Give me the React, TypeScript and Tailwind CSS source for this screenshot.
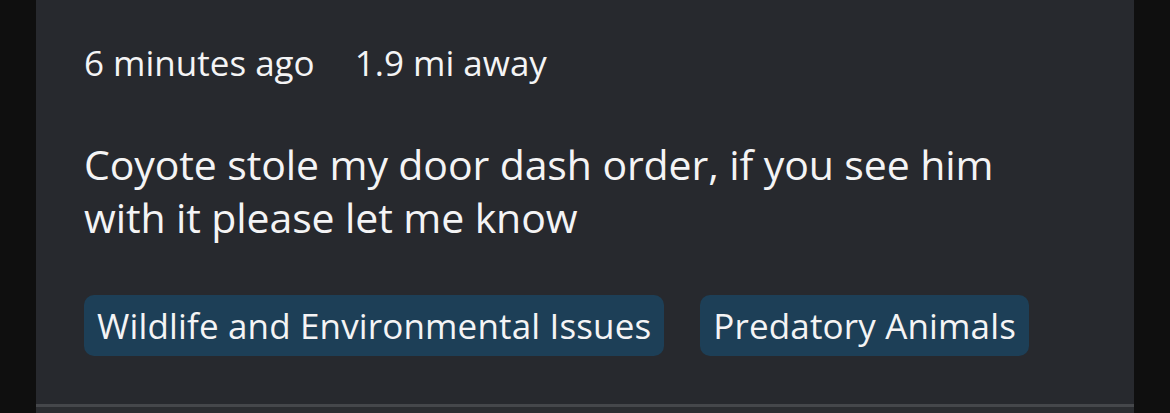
import React from "react";

const tags = ["Wildlife and Environmental Issues", "Predatory Animals"];

const App = () => {
  return (
    <div className="flex h-[413px] w-[1170px] bg-[#0f0f0f] font-['Open_Sans',sans-serif] text-[#f4f4f5]">
      <div className="ml-[36px] flex w-[1098px] flex-col bg-[#27292e]">
        <div className="flex-1 px-[48px] pt-[41px]">
          <div className="flex gap-[40px] text-[35px] leading-[44px]">
            <span>6 minutes ago</span>
            <span>1.9 mi away</span>
          </div>
          <p className="mt-[53px] text-[41px] leading-[53px] tracking-[-0.1px]">
            Coyote stole my door dash order, if you see him
            <br />
            with it please let me know
          </p>
          <div className="mt-[51px] flex gap-[36px]">
            {tags.map((tag) => (
              <span
                key={tag}
                className="h-[61px] rounded-[10px] bg-[#1d3f57] px-[13px] text-[35px] leading-[61px] tracking-[0.15px]"
              >
                {tag}
              </span>
            ))}
          </div>
        </div>
        <div className="h-[3px] bg-[#45474b]" />
        <div className="h-[6px] bg-[#2b2d31]" />
      </div>
    </div>
  );
};

export default App;
